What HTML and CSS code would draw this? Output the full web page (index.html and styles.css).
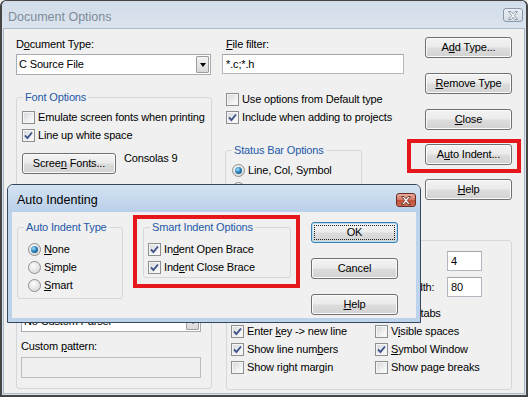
FILE: index.html
```html
<!DOCTYPE html>
<html lang="en">
<head>
  <meta charset="UTF-8">
  <meta name="viewport" content="width=device-width, initial-scale=1.0">
  <title>Document Options</title>
  <link rel="stylesheet" href="styles.css">
</head>
<body>
  <div class="window main-window">
    <div class="titlebar">
      <span class="title">Document Options</span>
      <span class="close-btn">
        <svg width="10" height="9" viewBox="0 0 10 9"><path d="M0.5 0.5h2.5l2 2.3 2-2.3h2.5l-3.2 4 3.2 4h-2.5l-2-2.3-2 2.3h-2.5l3.2-4z"/></svg>
      </span>
    </div>

    <div class="client">
      <div class="left-col">
        <div class="lbl">D<u>o</u>cument Type:</div>
        <div class="combo"><span>C Source File</span><span class="drop"></span></div>

        <fieldset class="group font-group">
          <legend>Font Options</legend>
          <div class="check-row"><span class="chk"></span><span>Emulate screen fonts when printing</span></div>
          <div class="check-row"><span class="chk"><svg viewBox="0 0 11 11"><path d="M2 5.3l2.4 2.8 4.6-5.6"/></svg></span><span>Line up white space</span></div>
          <div class="font-row">
            <button class="btn fonts-btn">Scree<u>n</u> Fonts...</button>
            <span class="font-name">Consolas 9</span>
          </div>
        </fieldset>

        <fieldset class="group parser-group">
          <legend>&nbsp;</legend>
          <div class="combo"><span>No Custom Parser</span><span class="drop"></span></div>
          <div class="lbl pattern-lbl">Custom <u>p</u>attern:</div>
          <input class="textbox pattern-box" type="text" disabled>
        </fieldset>
      </div>

      <div class="right-area">
        <div class="upper">
          <div class="mid-col">
            <div class="lbl filter-lbl"><u>F</u>ile filter:</div>
            <input class="textbox filter-box" type="text" value="*.c;*.h">
            <div class="check-row first-check"><span class="chk"></span><span>Use options from Default type</span></div>
            <div class="check-row indented"><span class="chk"><svg viewBox="0 0 11 11"><path d="M2 5.3l2.4 2.8 4.6-5.6"/></svg></span><span>Include when adding to projects</span></div>

            <fieldset class="group status-group">
              <legend>Status Bar Options</legend>
              <div class="check-row"><span class="radio on"></span><span>Line, Col, Symbol</span></div>
              <div class="check-row"><span class="radio"></span><span>Line, Col, Char Pos</span></div>
            </fieldset>
          </div>

          <div class="btn-col">
            <button class="btn">A<u>d</u>d Type...</button>
            <button class="btn"><u>R</u>emove Type</button>
            <button class="btn"><u>C</u>lose</button>
            <div class="highlight indent-highlight">
              <button class="btn">A<u>u</u>to Indent...</button>
            </div>
            <button class="btn help-btn"><u>H</u>elp</button>
          </div>
        </div>

        <fieldset class="group editor-group">
          <legend>&nbsp;</legend>
          <div class="field-row"><span>Tab width:</span><input class="textbox num" type="text" value="4"></div>
          <div class="field-row"><span>Margin width:</span><input class="textbox num" type="text" value="80"></div>
          <div class="check-grid">
            <span></span>
            <div class="check-row"><span class="chk"></span><span>Insert tabs</span></div>
            <div class="check-row"><span class="chk"><svg viewBox="0 0 11 11"><path d="M2 5.3l2.4 2.8 4.6-5.6"/></svg></span><span>Enter <u>k</u>ey -&gt; new line</span></div>
            <div class="check-row"><span class="chk"></span><span>V<u>i</u>sible spaces</span></div>
            <div class="check-row"><span class="chk"><svg viewBox="0 0 11 11"><path d="M2 5.3l2.4 2.8 4.6-5.6"/></svg></span><span>Show line num<u>b</u>ers</span></div>
            <div class="check-row"><span class="chk"><svg viewBox="0 0 11 11"><path d="M2 5.3l2.4 2.8 4.6-5.6"/></svg></span><span><u>S</u>ymbol Window</span></div>
            <div class="check-row"><span class="chk"></span><span>Show right margin</span></div>
            <div class="check-row"><span class="chk"></span><span>Show page breaks</span></div>
          </div>
        </fieldset>
      </div>
    </div>

    <div class="window dialog">
      <div class="titlebar">
        <span class="title">Auto Indenting</span>
        <span class="close-btn red">
          <svg width="10" height="9" viewBox="0 0 10 9"><path d="M0.5 0.5h2.5l2 2.3 2-2.3h2.5l-3.2 4 3.2 4h-2.5l-2-2.3-2 2.3h-2.5l3.2-4z"/></svg>
        </span>
      </div>
      <div class="dialog-body">
        <fieldset class="group type-group">
          <legend>Auto Indent Type</legend>
          <div class="check-row"><span class="radio on"></span><span><u>N</u>one</span></div>
          <div class="check-row"><span class="radio"></span><span>S<u>i</u>mple</span></div>
          <div class="check-row"><span class="radio"></span><span><u>S</u>mart</span></div>
        </fieldset>

        <div class="highlight smart-highlight">
          <fieldset class="group smart-group">
            <legend>Smart Indent Options</legend>
            <div class="check-row"><span class="chk"><svg viewBox="0 0 11 11"><path d="M2 5.3l2.4 2.8 4.6-5.6"/></svg></span><span>In<u>d</u>ent Open Brace</span></div>
            <div class="check-row"><span class="chk"><svg viewBox="0 0 11 11"><path d="M2 5.3l2.4 2.8 4.6-5.6"/></svg></span><span>Ind<u>e</u>nt Close Brace</span></div>
          </fieldset>
        </div>

        <div class="dialog-buttons">
          <button class="btn default">OK</button>
          <button class="btn">Cancel</button>
          <button class="btn"><u>H</u>elp</button>
        </div>
      </div>
    </div>
  </div>
</body>
</html>
```

FILE: styles.css
```css
* {
  box-sizing: border-box;
}

body {
  margin: 0;
  font-family: "Liberation Sans", Arial, sans-serif;
  font-size: 11px;
  line-height: 13px;
  letter-spacing: -0.15px;
  color: #000;
  background: #f0f0f0;
}

/* window frames */

.window {
  display: flex;
  flex-direction: column;
  border: 1px solid #4c4c4c;
  border-radius: 6px 6px 0 0;
}

.main-window {
  position: relative;
  width: 528px;
  height: 397px;
  border-width: 1px 2px 2px;
  border-color: #454545;
  background: #d8e2ed;
}

.titlebar {
  flex: none;
  height: 27px;
  display: flex;
  align-items: flex-start;
  padding: 7px 3px 0 6px;
  border-radius: 5px 5px 0 0;
  background: linear-gradient(#d1ddea, #dbe4ee);
}

.title {
  margin-top: 2px;
  font-size: 12.5px;
  line-height: 15px;
  letter-spacing: 0;
  color: #7f8b99;
}

.close-btn {
  margin-left: auto;
  width: 20px;
  height: 14px;
  display: flex;
  align-items: center;
  justify-content: center;
  border: 1px solid #8b98a7;
  border-radius: 3px;
  background: linear-gradient(#e9eff5, #d3dce7);
}

.close-btn svg path {
  fill: #fdfdfd;
  stroke: #75818f;
  stroke-width: 0.8;
}

.close-btn.red {
  border-color: #6e2b20;
  background: linear-gradient(#e6ab9b, #d27563 50%, #c2503b 51%, #c96a52);
}

.close-btn.red svg path {
  fill: #fff;
  stroke: #5c2016;
}

.client {
  flex: 1;
  display: flex;
  gap: 10px;
  margin: 0 1px 1px;
  padding: 8px 12px 0;
  border: 1px solid #aeb9c6;
  background: #f0f0f0;
}

/* controls */

u {
  text-decoration: underline;
}

.lbl {
  margin-top: 1px;
}

.btn {
  width: 87px;
  height: 21px;
  padding: 0;
  font: inherit;
  letter-spacing: inherit;
  color: #000;
  border: 1px solid #707070;
  border-radius: 3px;
  background: linear-gradient(#f3f3f3, #ebebeb 48%, #dddddd 52%, #d2d2d2);
  box-shadow: inset 0 0 0 1px #fbfbfb;
}

.btn.default {
  border-color: #3c7fb1;
  box-shadow: inset 0 0 0 1px #b5def4;
  outline: 1px dotted #222;
  outline-offset: -4px;
}

.textbox {
  height: 20px;
  padding: 0 3px;
  font: inherit;
  letter-spacing: inherit;
  color: #000;
  background: #fff;
  border: 1px solid #b3b7bf;
  border-top-color: #a0a4ac;
  outline: none;
}

.textbox:disabled {
  background: #f0f0f0;
  border-color: #bcbcbc;
}

.combo {
  margin-top: 3px;
  width: 195px;
  height: 21px;
  display: flex;
  align-items: center;
  padding-left: 2px;
  background: #fff;
  border: 1px solid #a7abb3;
}

.drop {
  margin-left: auto;
  margin-right: 1px;
  width: 13px;
  height: 17px;
  display: flex;
  align-items: center;
  justify-content: center;
  border: 1px solid #9d9d9d;
  border-radius: 1px;
  background: linear-gradient(#f4f4f4, #d8d8d8);
}

.drop::after {
  content: "";
  border-top: 4px solid #000;
  border-left: 3.5px solid transparent;
  border-right: 3.5px solid transparent;
}

.check-row {
  height: 13px;
  display: flex;
  align-items: center;
  white-space: nowrap;
}

.check-row + .check-row {
  margin-top: 5px;
}

.chk,
.radio {
  flex: none;
  width: 13px;
  height: 13px;
  margin-right: 3px;
  border: 1px solid #8e8f8f;
}

.chk {
  display: flex;
  background: linear-gradient(135deg, #d3d5d8, #f2f2f3 65%, #fdfdfd);
  box-shadow: inset 0 0 0 1px #f5f5f5;
}

.chk svg {
  width: 11px;
  height: 11px;
}

.chk svg path {
  fill: none;
  stroke: #3e5389;
  stroke-width: 1.9;
}

.radio {
  position: relative;
  border-radius: 50%;
  background: radial-gradient(circle at 40% 35%, #fdfdfd, #dedede 70%, #cfcfcf);
}

.radio.on::after {
  content: "";
  position: absolute;
  left: 2px;
  top: 2px;
  width: 7px;
  height: 7px;
  border-radius: 50%;
  background: radial-gradient(circle at 38% 35%, #a6e1fa, #2d86bf 45%, #0e3f66);
}

.highlight {
  border: 4px solid #e5161c;
}

/* group boxes */

.group {
  --pad: 5px;
  margin: 0;
  min-width: 0;
  border: 1px solid #d3d8dc;
  border-radius: 3px;
  padding: 7px 5px 8px var(--pad);
}

.group legend {
  margin-left: calc(6px - var(--pad));
  padding: 0 2px;
  line-height: 13px;
  color: #2459a8;
}

/* left column */

.left-col {
  width: 196px;
  display: flex;
  flex-direction: column;
}

.font-group {
  margin-top: 16px;
  padding-bottom: 20px;
}

.font-row {
  display: flex;
  align-items: flex-start;
  gap: 8px;
  margin-top: 11px;
}

.fonts-btn {
  width: 94px;
}

.font-name {
  margin-top: -1px;
}

.parser-group {
  --pad: 4px;
  margin-top: 14px;
  padding: 89px 4px 10px var(--pad);
}

.parser-group .combo {
  margin-top: 0;
  width: 180px;
}

.pattern-lbl {
  margin-top: 8px;
}

.pattern-box {
  margin-top: 4px;
  width: 180px;
  height: 21px;
}

/* right area */

.right-area {
  width: 290px;
  display: flex;
  flex-direction: column;
}

.upper {
  display: flex;
  justify-content: space-between;
}

.mid-col {
  width: 182px;
  display: flex;
  flex-direction: column;
}

.filter-lbl {
  padding-left: 4px;
}

.filter-box {
  margin-top: 3px;
  width: 182px;
}

.first-check {
  margin-top: 19px;
  margin-left: 4px;
}

.indented {
  margin-left: 4px;
}

.status-group {
  --pad: 6px;
  width: 137px;
  margin-top: 20px;
  margin-left: 3px;
}

.btn-col {
  width: 87px;
  display: flex;
  flex-direction: column;
}

.btn-col > .btn + .btn {
  margin-top: 15px;
}

.indent-highlight {
  margin: 9px -9px 0 -18px;
  padding: 1px 5px 4px 14px;
}

.btn-col > .help-btn {
  margin-top: 6px;
}

.editor-group {
  --pad: 4px;
  margin-top: 30px;
  margin-left: 4px;
  padding: 4px 0 15px var(--pad);
}

.field-row {
  margin-left: 140px;
  height: 20px;
  display: grid;
  grid-template-columns: 76px 35px;
  align-items: center;
}

.field-row + .field-row {
  margin-top: 6px;
}

.num {
  width: 35px;
}

.check-grid {
  margin-top: 10px;
  display: grid;
  grid-template-columns: 144px auto;
  row-gap: 5px;
}

.check-grid .check-row {
  margin-top: 0;
}

/* auto indenting dialog */

.dialog {
  position: absolute;
  left: 5px;
  top: 183px;
  width: 414px;
  height: 139px;
  border-color: #34475d;
  background: #bdd3ec;
}

.dialog .titlebar {
  padding: 8px 4px 0 9px;
  background: linear-gradient(#d5e3f3, #b9cfe9);
}

.dialog .title {
  margin-top: 0;
  color: #000;
}

.dialog-body {
  flex: 1;
  display: flex;
  align-items: flex-start;
  margin: 0 4px 4px;
  padding-left: 5px;
  background: #f0f0f0;
}

.type-group {
  --pad: 10px;
  width: 106px;
  margin-top: 9px;
  padding: 9px 4px 6px var(--pad);
}

.smart-highlight {
  width: 167px;
  margin: 3px 0 0 10px;
  padding: 2px 5px 6px 6px;
}

.smart-group {
  --pad: 4px;
  padding: 9px 4px 3px var(--pad);
}

.dialog-buttons {
  display: flex;
  flex-direction: column;
  gap: 15px;
  margin: 10px 0 0 11px;
}
```
